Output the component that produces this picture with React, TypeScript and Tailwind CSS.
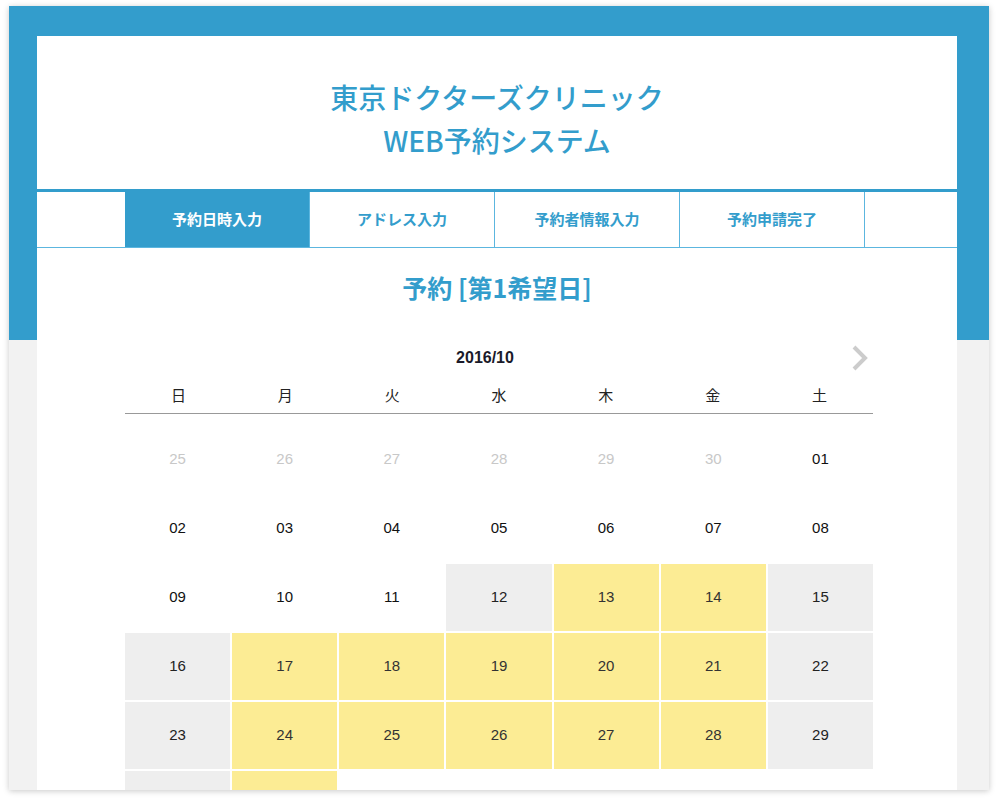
import React from "react";

const jp = "font-['Noto_Sans_CJK_JP',sans-serif]";
const num = "font-['Liberation_Sans','Noto_Sans_CJK_JP',sans-serif]";

const tabs = ["予約日時入力", "アドレス入力", "予約者情報入力", "予約申請完了"];
const weekdays = ["日", "月", "火", "水", "木", "金", "土"];

type Kind = "prev" | "plain" | "grey" | "open";
type Day = { label: string; kind: Kind };

// October 2016
const days: Day[] = [
  ...["25", "26", "27", "28", "29", "30"].map((d) => ({ label: d, kind: "prev" as Kind })),
  { label: "01", kind: "plain" },
  ...["02", "03", "04", "05", "06", "07", "08", "09", "10", "11"].map((d) => ({ label: d, kind: "plain" as Kind })),
  { label: "12", kind: "grey" },
  { label: "13", kind: "open" },
  { label: "14", kind: "open" },
  { label: "15", kind: "grey" },
  { label: "16", kind: "grey" },
  ...["17", "18", "19", "20", "21"].map((d) => ({ label: d, kind: "open" as Kind })),
  { label: "22", kind: "grey" },
  { label: "23", kind: "grey" },
  ...["24", "25", "26", "27", "28"].map((d) => ({ label: d, kind: "open" as Kind })),
  { label: "29", kind: "grey" },
  { label: "30", kind: "grey" },
  { label: "31", kind: "open" },
];

const cellClass: Record<Kind, string> = {
  prev: "text-[#c8c8c8]",
  plain: "text-[#111]",
  grey: "bg-[#eeeeee] text-[#222]",
  open: "bg-[#fcec94] text-[#333]",
};

export default function App() {
  return (
    <div className="w-[998px] h-[802px] bg-white pt-[6px] pl-[9px]">
      {/* frame */}
      <div className="w-[980px] h-[784px] overflow-hidden shadow-[0_1px_6px_rgba(0,0,0,0.22)] bg-[linear-gradient(to_bottom,#339dcc_334px,#f2f2f2_334px)] pl-[28px] pr-[32px] pt-[30px]">
        <div className="bg-white min-h-[760px]">
          {/* header */}
          <div className={`h-[153px] pt-[40px] text-center text-[28px] leading-[43px] font-medium text-[#339dcc] ${jp}`}>
            <div>東京ドクターズクリニック</div>
            <div>WEB予約システム</div>
          </div>

          {/* step tabs */}
          <div className="border-t-[3px] border-b border-t-[#339dcc] border-b-[#5cb6df] flex pl-[88px]">
            {tabs.map((t, i) => (
              <div
                key={t}
                className={`w-[185px] h-[55px] flex items-center justify-center text-[15px] font-bold border-r border-[#5cb6df] ${jp} ${
                  i === 0 ? "bg-[#339dcc] text-white" : "text-[#339dcc]"
                }`}
              >
                {t}
              </div>
            ))}
          </div>

          <h2 className={`mt-[21px] text-center text-[25px] leading-[36px] font-bold text-[#339dcc] ${jp}`}>
            予約 [第1希望日]
          </h2>

          {/* calendar */}
          <div className="ml-[88px] w-[748px] mt-[38px]">
            <div className="relative h-[30px] flex items-center justify-center pr-[28px]">
              <span className={`text-[16px] font-bold text-[#1a1a2a] ${num}`}>2016/10</span>
              <svg className="absolute right-[2px] top-[1px]" width="22" height="28" viewBox="0 0 22 28">
                <path d="M5 3 L16 14 L5 25" fill="none" stroke="#cccccc" strokeWidth="4" />
              </svg>
            </div>
            <div className={`grid grid-cols-7 h-[41px] pt-[5px] items-center border-b-[1.5px] border-b-[#999999] text-[15px] text-[#222] ${jp}`}>
              {weekdays.map((w) => (
                <div key={w} className="text-center">
                  {w}
                </div>
              ))}
            </div>
            <div className={`mt-[12px] grid grid-cols-7 gap-[2px] text-[15px] ${num}`}>
              {days.map((d, i) => (
                <div key={i} className={`h-[67px] flex items-center justify-center ${cellClass[d.kind]}`}>
                  {d.label}
                </div>
              ))}
            </div>
          </div>
        </div>
      </div>
    </div>
  );
}
